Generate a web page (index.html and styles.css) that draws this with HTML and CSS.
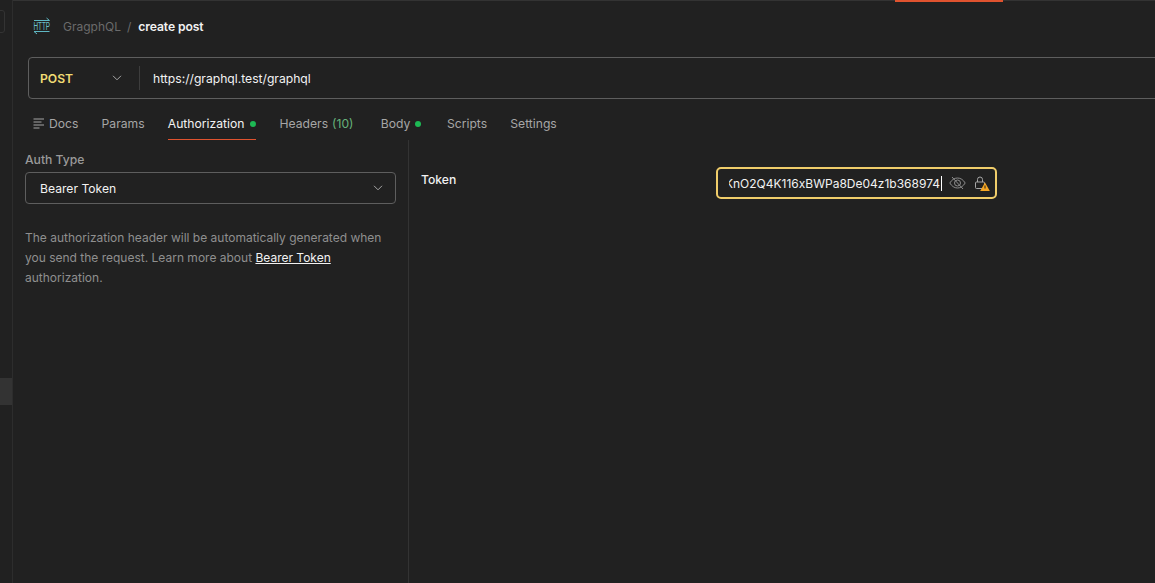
FILE: index.html
```html
<!DOCTYPE html>
<html lang="en">
<head>
<meta charset="utf-8">
<title>create post</title>
<link rel="stylesheet" href="styles.css">
</head>
<body>
<div class="app">
  <aside class="rail">
    <div class="rail-box"></div>
    <div class="rail-selected"></div>
  </aside>
  <main class="main">
    <div class="topline"><span class="topline-active"></span></div>
    <header class="crumbs">
      <svg class="http-icon" width="18" height="18" viewBox="0 0 18 18" fill="none" stroke="#5fb8c4" stroke-width="1">
        <path d="M1 3.500H16.500M13.500 1l3 2.500M1 14.500H16.500M1 14.500l3 2.500"/>
        <text x="0.500" y="12.500" textLength="16.500" lengthAdjust="spacingAndGlyphs" class="http-text">HTTP</text>
      </svg>
      <span class="crumb-parent">GragphQL</span>
      <span class="crumb-sep">/</span>
      <span class="crumb-current">create post</span>
    </header>
    <section class="urlbar">
      <div class="method">
        <span class="method-name">POST</span>
        <svg class="chev" width="10" height="6" viewBox="0 0 10 6" fill="none" stroke="#a6a6a6" stroke-width="1"><path d="M1 .8l4 4 4-4"/></svg>
      </div>
      <div class="url">https://graphql.test/graphql</div>
    </section>
    <nav class="tabs">
      <a class="tab tab-docs">
        <svg width="12" height="11" viewBox="0 0 12 11" fill="none" stroke="#a6a6a6" stroke-width="1"><path d="M.5 1h10.500M.5 4h8M.5 7h10.500M.5 10h6"/></svg>
        Docs
      </a>
      <a class="tab tab-params">Params</a>
      <a class="tab tab-auth">Authorization <i class="dot"></i></a>
      <a class="tab tab-headers">Headers <span class="count">(10)</span></a>
      <a class="tab tab-body">Body <i class="dot"></i></a>
      <a class="tab tab-scripts">Scripts</a>
      <a class="tab">Settings</a>
    </nav>
    <section class="content">
      <div class="auth">
        <div class="auth-label">Auth Type</div>
        <div class="select">
          <span>Bearer Token</span>
          <svg width="10" height="6" viewBox="0 0 10 6" fill="none" stroke="#a6a6a6" stroke-width="1"><path d="M1 .8l4 4 4-4"/></svg>
        </div>
        <p class="auth-help">The authorization header will be automatically generated when you send the request. Learn more about <a class="link">Bearer Token</a> authorization.</p>
      </div>
      <div class="token">
        <div class="token-label">Token</div>
        <div class="token-input">
          <div class="token-clip"><span class="token-value">xK9KnO2Q4K116xBWPa8De04z1b368974</span></div>
          <svg class="eye" width="17" height="14" viewBox="0 0 17 14" fill="none" stroke="#8c8c8c" stroke-width="1">
            <path d="M.8 7c2-3.200 4.500-5 7.700-5s5.700 1.800 7.700 5c-2 3.200-4.500 5-7.700 5S2.800 10.200.8 7z"/>
            <circle cx="8.500" cy="7" r="3"/>
            <path d="M3 1l11 12"/>
          </svg>
          <svg class="lock" width="16" height="15" viewBox="0 0 16 15" fill="none">
            <path d="M3.500 6V3.500a2.500 2.500 0 0 1 5 0V6" stroke="#a6a6a6"/>
            <rect x="1.500" y="6" width="9" height="6.500" rx="1" stroke="#a6a6a6"/>
            <path d="M11 6.500l4.800 8.500H6.200z" fill="#f5a623"/>
            <path d="M11 9.500v3" stroke="#212121"/>
          </svg>
        </div>
      </div>
    </section>
  </main>
</div>
</body>
</html>
```
FILE: styles.css
```css
* { box-sizing: border-box; }
html, body { margin: 0; height: 100%; overflow: hidden; }
body {
  background: #212121;
  color: #a6a6a6;
  font-family: Inter, "Liberation Sans", sans-serif;
  font-size: 12.15px;
}
.app { display: flex; height: 583px; width: 1155px; }
.rail {
  position: relative;
  flex: 0 0 13px;
  border-right: 1px solid #2d2d2d;
  background: #212121;
}
.rail-box {
  position: absolute;
  left: -4px;
  top: 10px;
  width: 9px;
  height: 23px;
  border: 1px solid #333;
  border-radius: 3px;
}
.rail-selected {
  position: absolute;
  left: 0;
  top: 378px;
  width: 12px;
  height: 27px;
  background: #333;
}
.main { flex: 1; min-width: 0; display: flex; flex-direction: column; }
.topline { height: 2px; border-top: 1px solid #333; position: relative; }
.topline-active {
  position: absolute;
  left: 882px;
  top: -1px;
  width: 108px;
  height: 2px;
  background: #e0532f;
}
.crumbs {
  display: flex;
  align-items: center;
  height: 48px;
  padding-left: 20px;
}
.http-icon { margin-right: 12px; overflow: visible; }
.http-text {
  font-family: "Liberation Sans", sans-serif;
  font-size: 10px;
  fill: #6cc2cd;
  stroke: none;
}
.crumb-parent { color: #6b6b6b; font-size: 12px; }
.crumb-sep { color: #6b6b6b; margin: 0 7px 0 6px; }
.crumb-current { color: #f2f2f2; font-weight: 600; letter-spacing: -0.1px; }
.urlbar {
  display: flex;
  align-items: center;
  height: 42px;
  margin: 7px -12px 0 15px;
  border: 1px solid #5e5e5e;
  border-radius: 4px;
}
.method {
  display: flex;
  align-items: center;
  justify-content: space-between;
  width: 111px;
  height: 24px;
  padding: 0 17px 0 11px;
  border-right: 1px solid #3d3d3d;
}
.method-name { color: #f1dc74; font-weight: 600; }
.url { color: #f2f2f2; padding-left: 13px; }
.tabs {
  display: flex;
  align-items: stretch;
  gap: 23.200px;
  height: 41px;
  padding: 8px 0 0 20px;
}
.tab {
  display: flex;
  align-items: center;
  gap: 5px;
  border-bottom: 1px solid transparent;
}
.tab-auth { color: #f2f2f2; border-bottom-color: #e0532f; gap: 6px; }
.tab-headers { margin-right: 4px; gap: 4px; }
.tab-body { margin-right: 2.500px; }
.tab-docs { gap: 4px; }
.dot {
  width: 6px;
  height: 6px;
  border-radius: 50%;
  background: #1db954;
  margin-top: 1px;
}
.count { color: #66b27a; }
.content { flex: 1; display: flex; min-height: 0; }
.auth { flex: 0 0 396px; padding: 12px 12px 0 12px; border-right: 1px solid #333; }
.auth-label { font-weight: 500; line-height: 16px; color: #9a9a9a; }
.select {
  display: flex;
  align-items: center;
  justify-content: space-between;
  height: 32px;
  margin-top: 4px;
  padding: 0 12px 0 14px;
  border: 1px solid #5e5e5e;
  border-radius: 4px;
  color: #f2f2f2;
}
.auth-help { margin: 24px 0 0; line-height: 20px; width: 365px; color: #8f8f8f; font-size: 12px; }
.link { color: #f2f2f2; text-decoration: underline; }
.token { flex: 1; display: flex; align-items: flex-start; padding: 27px 0 0 12px; }
.token-label { width: 295px; color: #f2f2f2; font-weight: 500; line-height: 25px; }
.token-input {
  display: flex;
  align-items: center;
  width: 281px;
  height: 32px;
  padding: 0 0 0 11px;
  border: 2px solid #f0cd6a;
  border-radius: 5px;
}
.token-clip {
  display: flex;
  justify-content: flex-end;
  width: 213px;
  overflow: hidden;
  flex-shrink: 0;
}
.token-value {
  color: #f2f2f2;
  font-size: 12px;
  white-space: nowrap;
  border-right: 1px solid #fff;
  padding-right: 1px;
}
.eye { margin-left: 7px; }
.lock { margin-left: 8px; }
```
